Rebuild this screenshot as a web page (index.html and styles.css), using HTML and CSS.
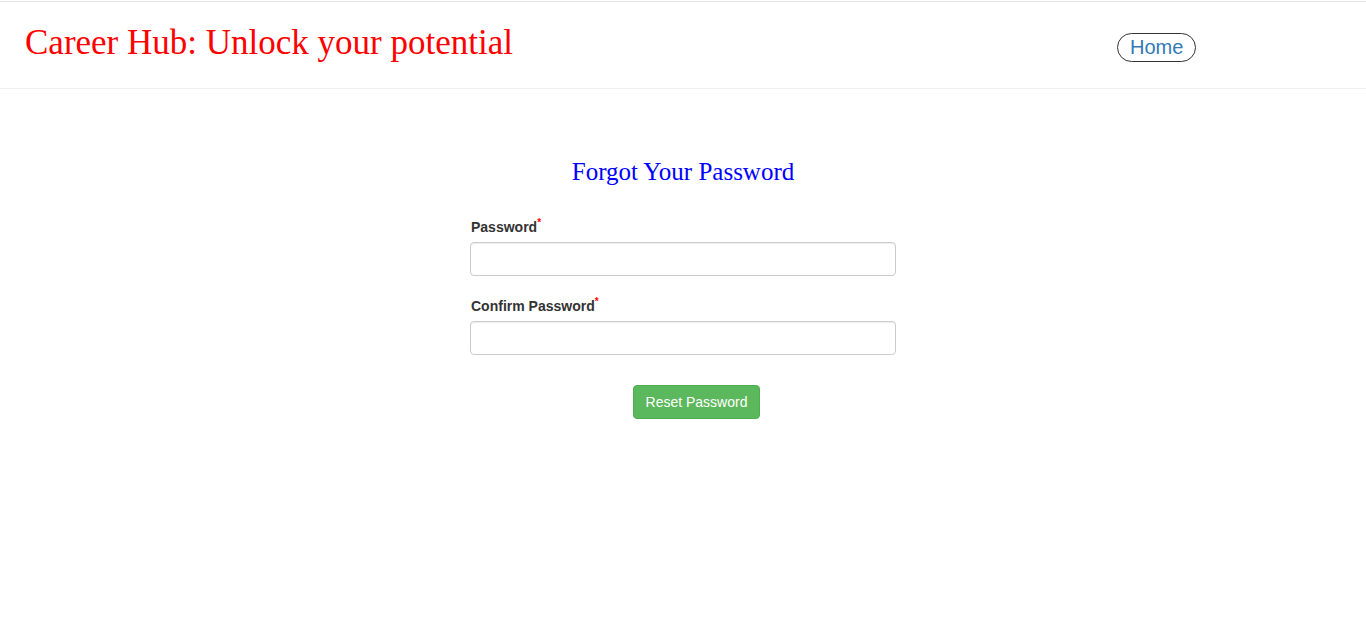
FILE: index.html
```html
<!DOCTYPE html>
<html>
<head>
<meta charset="utf-8">
<title>Career Hub</title>
<link rel="stylesheet" href="styles.css">
</head>
<body>
<header class="site-header">
  <h1 class="brand">Career Hub: Unlock your potential</h1>
  <nav class="nav">
    <a class="home-link" href="#">Home</a>
  </nav>
</header>
<main class="main">
  <h3 class="page-title">Forgot Your Password</h3>
  <form class="reset-form">
    <div class="form-group">
      <label class="form-label">Password<sup class="req">*</sup></label>
      <input class="form-control" type="password">
    </div>
    <div class="form-group">
      <label class="form-label">Confirm Password<sup class="req">*</sup></label>
      <input class="form-control" type="password">
    </div>
    <div class="actions">
      <button class="btn-success" type="button">Reset Password</button>
    </div>
  </form>
</main>
</body>
</html>
```
FILE: styles.css
```css
* { box-sizing: border-box; }
html, body { margin: 0; padding: 0; background: #fff; }
body {
  font-family: "Liberation Sans", Arial, sans-serif;
  font-size: 14px;
  color: #333;
}
.site-header {
  margin-top: 1px;
  border-top: 1px solid #e2e2e2;
  border-bottom: 1px solid #eeeeee;
  height: 88px;
  display: flex;
  align-items: flex-start;
  padding-left: 25px;
}
.brand {
  margin: 21px 0 0 0;
  font-family: "Liberation Serif", "Times New Roman", serif;
  font-weight: normal;
  font-size: 35px;
  line-height: 40px;
  color: #ff0000;
  width: 1092px;
}
.nav { padding-top: 31px; }
.home-link {
  display: inline-block;
  border: 1px solid #333;
  border-radius: 15px;
  padding: 0 12px;
  height: 29px;
  line-height: 27px;
  font-size: 20px;
  color: #337ab7;
  text-decoration: none;
}
.main {
  display: flex;
  flex-direction: column;
  align-items: center;
  padding-top: 70px;
}
.page-title {
  margin: 0 0 32px 0;
  font-family: "Liberation Serif", "Times New Roman", serif;
  font-weight: normal;
  font-size: 25px;
  line-height: 26px;
  color: #0000ff;
}
.reset-form { width: 426px; }
.form-group { margin-bottom: 20px; }
.form-label {
  display: block;
  font-weight: bold;
  font-size: 14px;
  line-height: 20px;
  margin-bottom: 5px;
  padding-left: 1px;
  color: #333;
}
.req {
  color: #ff0000;
  font-size: 10px;
  line-height: 0;
  vertical-align: 6px;
  font-weight: bold;
}
.form-control {
  display: block;
  width: 100%;
  height: 34px;
  border: 1px solid #ccc;
  border-radius: 4px;
  padding: 6px 12px;
  font-size: 14px;
  box-shadow: inset 0 1px 1px rgba(0,0,0,.075);
}
.actions {
  display: flex;
  justify-content: center;
  padding-left: 27px;
  padding-top: 10px;
}
.btn-success {
  background: #5cb85c;
  border: 1px solid #4cae4c;
  border-radius: 4px;
  color: #fff;
  font-family: "Liberation Sans", Arial, sans-serif;
  font-size: 14px;
  line-height: 20px;
  padding: 6px 12px;
  height: 34px;
}
```
